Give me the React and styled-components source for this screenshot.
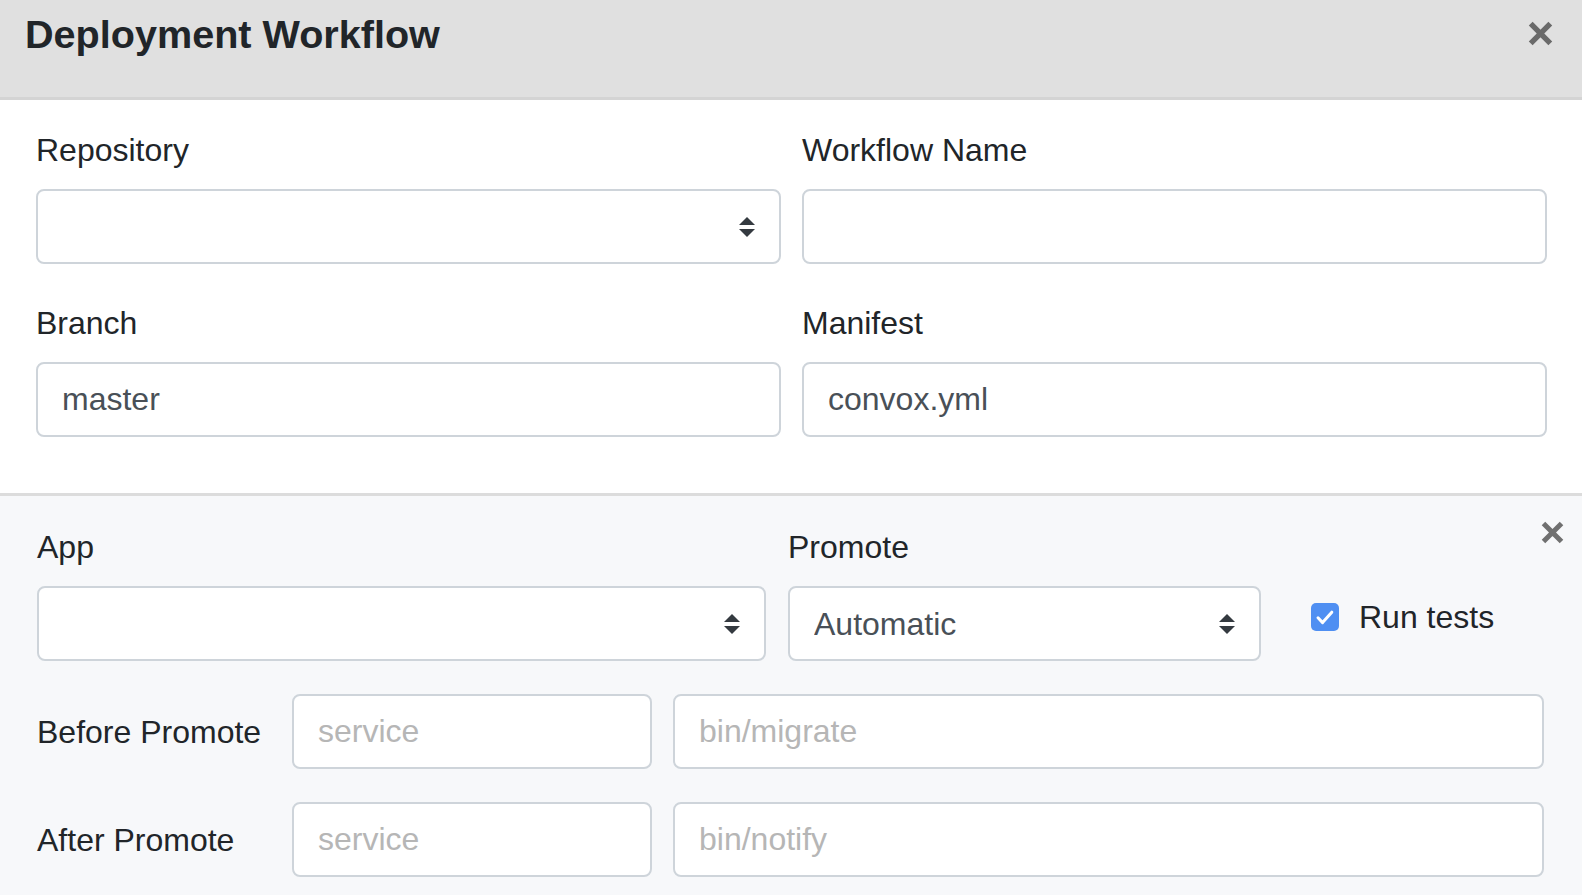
import React from 'react';
import styled, { createGlobalStyle } from 'styled-components';

const GlobalStyle = createGlobalStyle`
  html, body {
    margin: 0;
    padding: 0;
    background: #ffffff;
  }
  body {
    font-family: "Liberation Sans", Arial, sans-serif;
    color: #212529;
  }
  * {
    box-sizing: border-box;
  }
`;

const Modal = styled.div`
  width: 1582px;
  height: 895px;
  display: flex;
  flex-direction: column;
  overflow: hidden;
`;

const Header = styled.div`
  height: 100px;
  flex-shrink: 0;
  display: flex;
  justify-content: space-between;
  align-items: flex-start;
  padding: 10px 29px 0 25px;
  background: #e0e0e0;
  border-bottom: 3px solid #d4d4d4;
`;

const Title = styled.h5`
  margin: 0;
  font-size: 39.6px;
  line-height: 48px;
  font-weight: 700;
  color: #212529;
`;

const CloseButton = styled.button`
  border: 0;
  padding: 0;
  background: transparent;
  display: flex;
  cursor: pointer;
  margin-top: ${(p) => p.$top || 0}px;
`;

const MainSection = styled.div`
  display: grid;
  grid-template-columns: 1fr 1fr;
  column-gap: 21px;
  row-gap: 35px;
  padding: 26px 35px 56px 36px;
  border-bottom: 3px solid #dcdcdc;
`;

const Field = styled.div`
  display: flex;
  flex-direction: column;
`;

const Label = styled.label`
  font-size: 32px;
  line-height: 48px;
  color: #212529;
  margin-bottom: 15px;
`;

const TextInput = styled.input`
  width: 100%;
  height: 75px;
  padding: 0 24px;
  border: 2px solid #ced4da;
  border-radius: 8px;
  background: #ffffff;
  font-family: "Liberation Sans", Arial, sans-serif;
  font-size: 32px;
  color: #495057;
  outline: none;

  &::placeholder {
    color: #b6b6b6;
  }
`;

const SelectWrap = styled.div`
  position: relative;
  width: 100%;
`;

const Select = styled.select`
  width: 100%;
  height: 75px;
  padding: 0 60px 0 24px;
  border: 2px solid #ced4da;
  border-radius: 8px;
  background: #ffffff;
  font-family: "Liberation Sans", Arial, sans-serif;
  font-size: 32px;
  color: #495057;
  appearance: none;
  -webkit-appearance: none;
  outline: none;
`;

const Arrow = styled.svg`
  position: absolute;
  right: 26px;
  top: 50%;
  margin-top: -10px;
  pointer-events: none;
`;

const StepSection = styled.div`
  position: relative;
  flex: 1;
  background: #f7f8fa;
  padding: 27px 38px 0 37px;
`;

const StepClose = styled.div`
  position: absolute;
  top: 25px;
  right: 18px;
`;

const TopRow = styled.div`
  display: grid;
  grid-template-columns: 729px 473px 1fr;
  column-gap: 22px;
`;

const CheckField = styled.label`
  display: flex;
  align-items: center;
  gap: 20px;
  margin: 70px 0 0 28px;
  height: 48px;
  font-size: 32px;
  color: #212529;
`;

const CheckBox = styled.span`
  width: 28px;
  height: 28px;
  border-radius: 5px;
  background: #4f8ff2;
  display: flex;
  align-items: center;
  justify-content: center;
  flex-shrink: 0;
`;

const HookRow = styled.div`
  display: grid;
  grid-template-columns: 234px 360px 1fr;
  column-gap: 21px;
  align-items: center;
  margin-top: 33px;
`;

const HookLabel = styled.span`
  font-size: 32px;
  line-height: 48px;
  color: #212529;
  white-space: nowrap;
`;

const CloseIcon = ({ size = 24, color = '#6b6b6b' }) => (
  <svg width={size} height={size} viewBox="0 0 24 24">
    <path d="M2.6 2.6L21.4 21.4M21.4 2.6L2.6 21.4" stroke={color} strokeWidth="5.2" />
  </svg>
);

const SelectField = ({ value, children }) => (
  <SelectWrap>
    <Select defaultValue={value}>{children}</Select>
    <Arrow width="16" height="20" viewBox="0 0 4 5">
      <path d="M2 0L0 2h4zm0 5L0 3h4z" fill="#343a40" />
    </Arrow>
  </SelectWrap>
);

const App = () => (
  <>
    <GlobalStyle />
    <Modal>
      <Header>
        <Title>Deployment Workflow</Title>
        <CloseButton $top={11} aria-label="Close">
          <CloseIcon size={25} color="#6a6a6a" />
        </CloseButton>
      </Header>

      <MainSection>
        <Field>
          <Label>Repository</Label>
          <SelectField value="">
            <option value=""></option>
          </SelectField>
        </Field>
        <Field>
          <Label>Workflow Name</Label>
          <TextInput type="text" />
        </Field>
        <Field>
          <Label>Branch</Label>
          <TextInput type="text" defaultValue="master" />
        </Field>
        <Field>
          <Label>Manifest</Label>
          <TextInput type="text" defaultValue="convox.yml" />
        </Field>
      </MainSection>

      <StepSection>
        <StepClose>
          <CloseIcon size={23} color="#707070" />
        </StepClose>
        <TopRow>
          <Field>
            <Label>App</Label>
            <SelectField value="">
              <option value=""></option>
            </SelectField>
          </Field>
          <Field>
            <Label>Promote</Label>
            <SelectField value="automatic">
              <option value="automatic">Automatic</option>
              <option value="manual">Manual</option>
            </SelectField>
          </Field>
          <CheckField>
            <CheckBox>
              <svg width="28" height="28" viewBox="0 0 28 28">
                <path d="M7 14.8L11.6 19.6L20.8 9.2" fill="none" stroke="#ffffff" strokeWidth="3" strokeLinecap="round" strokeLinejoin="round" />
              </svg>
            </CheckBox>
            Run tests
          </CheckField>
        </TopRow>

        <HookRow>
          <HookLabel>Before Promote</HookLabel>
          <TextInput type="text" placeholder="service" />
          <TextInput type="text" placeholder="bin/migrate" />
        </HookRow>
        <HookRow>
          <HookLabel>After Promote</HookLabel>
          <TextInput type="text" placeholder="service" />
          <TextInput type="text" placeholder="bin/notify" />
        </HookRow>
      </StepSection>
    </Modal>
  </>
);

export default App;
